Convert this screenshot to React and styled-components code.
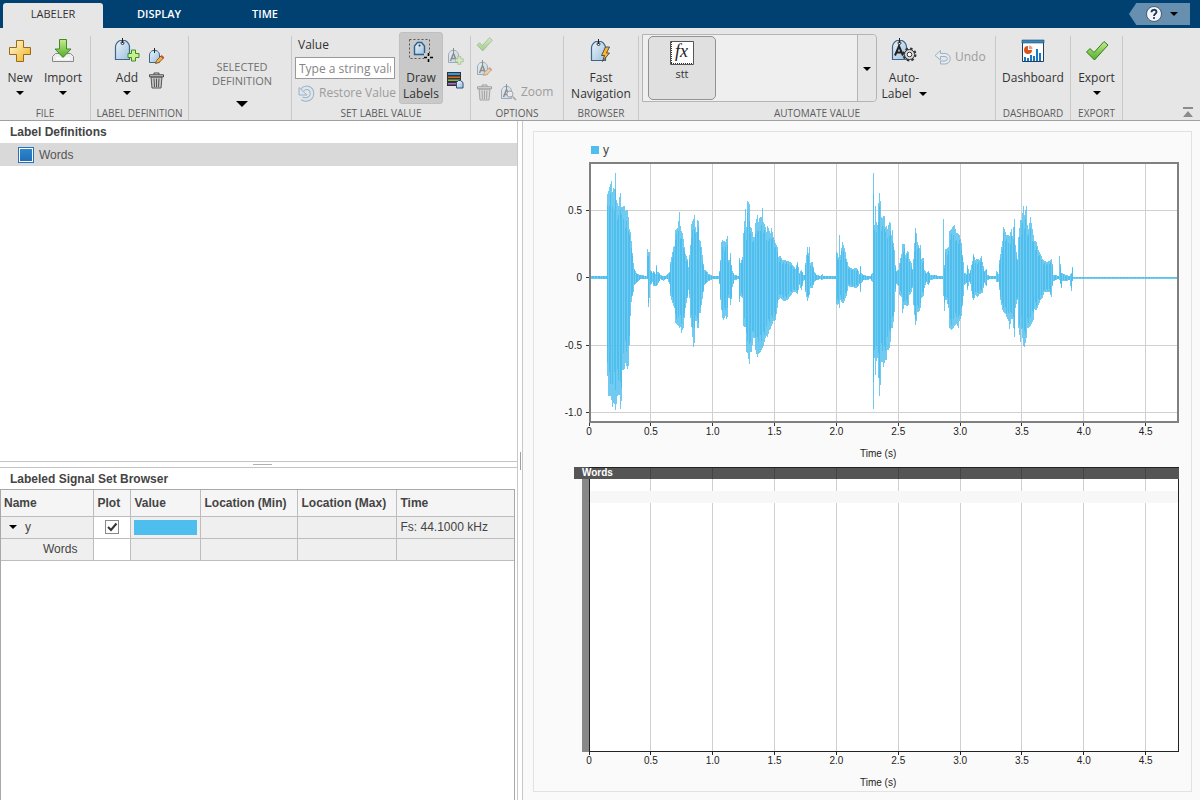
import React from "react";
import styled, { createGlobalStyle } from "styled-components";

const Global = createGlobalStyle`
  * { box-sizing: border-box; }
  body { margin: 0; font-family: "Liberation Sans", Arial, sans-serif; font-size: 12px; color: #444; }
  button, input { font: inherit; color: inherit; }
`;

const UI = `"Open Sans", "Noto Sans", sans-serif`;

/* ---------- page frame ---------- */
const Page = styled.div`
  display: flex; flex-direction: column; min-height: 100vh; background: #fff;
`;
const TabBar = styled.nav`
  display: flex; align-items: flex-end; gap: 6px; height: 28px; padding-left: 3px;
  background: #004172; font-family: ${UI};
`;
const Tab = styled.button`
  width: 100px; height: 25px; padding: 0 0 3px; border: 0; border-radius: 3px 3px 0 0;
  font-size: 11px; line-height: 16px;
  background: ${(p) => (p.$active ? "#e6e6e6" : "transparent")};
  color: ${(p) => (p.$active ? "#333" : "#fff")};
  font-weight: ${(p) => (p.$active ? 400 : 600)};
`;
const Help = styled.button`
  display: flex; align-items: center; gap: 8px; width: 61px; height: 22px;
  margin: 0 10px 3px auto; padding: 0 0 0 17px; border: 0; background: #6790b0; color: #000;
  clip-path: polygon(0 50%, 12% 0, 100% 0, 100% 100%, 12% 100%);
`;
const Strip = styled.div`
  display: flex; height: 93px; background: #e6e6e6; border-bottom: 1px solid #a0a0a0;
  font-family: ${UI}; color: #333;
`;
const Section = styled.section`
  position: relative; display: flex; flex-direction: column; flex: none;
  width: ${(p) => p.$w}px; padding: 4px 1px 0 0;
  &::after {
    content: ""; position: absolute; right: 0; top: 8px; bottom: 0; width: 1px; background: #c8c8c8;
  }
`;
const Body = styled.div`
  display: flex; flex: none; height: 72px; padding-left: ${(p) => p.$pad || 0}px;
  justify-content: ${(p) => p.$justify || "flex-start"};
`;
const Caption = styled.h2`
  flex: none; margin: 0; font-size: 10px; line-height: 18px; font-weight: 400; color: #5c5c5c;
  text-align: center; white-space: nowrap;
`;
const Big = styled.button`
  display: flex; flex-direction: column; align-items: center; justify-content: flex-start; flex: none;
  width: ${(p) => p.$w}px; height: 72px; padding: ${(p) => (p.$pressed ? "4px" : "5px")} 0 0;
  border: ${(p) => (p.$pressed ? "1px solid #c0c0c0" : "0")}; border-radius: 3px;
  background: ${(p) => (p.$pressed ? "#c9c9c9" : "transparent")};
  font-size: 12px; line-height: 16px; white-space: nowrap;
  > svg:first-child { flex: none; margin-bottom: 7px; overflow: visible; }
`;
const Stack = styled.div`
  display: flex; flex-direction: column; gap: ${(p) => p.$gap || 0}px;
  padding: ${(p) => p.$top || 0}px 0 0 ${(p) => p.$left || 0}px;
`;
const Row = styled.div`
  display: flex; gap: 7px;
`;
const Small = styled.button`
  display: flex; align-items: center; gap: 4px; height: 20px; padding: 0; border: 0;
  background: transparent; font-size: 12px; line-height: 16px; white-space: nowrap;
  &:disabled { color: #9c9c9c; }
  &:disabled svg { opacity: 0.45; }
`;
const Selected = styled.button`
  display: flex; flex-direction: column; align-items: center; align-self: flex-start;
  width: 100%; padding: 28px 0 0 4px;
  border: 0; background: transparent; font-size: 11px; line-height: 14px; color: #707070;
  svg { flex: none; margin-top: 13px; }
`;
const ValueBox = styled.div`
  display: flex; flex-direction: column; width: 104px;
  label { font-size: 12px; line-height: 16px; padding: 5px 0 4px 3px; }
  input {
    width: 100px; height: 22px; border: 1px solid #999; background: #fff; padding: 0 3px; font-size: 12px;
  }
  input::placeholder { color: #858585; opacity: 1; }
  button { margin: 4px 0 0 3px; }
`;
const Gallery = styled.div`
  display: flex; flex: none; width: 235px; height: 68px; margin: 2px 8px 0 0; padding: 1px 0 1px 5px;
  border: 1px solid #b4b4b4; border-radius: 0 4px 4px 0; background: #efefef;
`;
const Tile = styled.button`
  display: flex; flex-direction: column; align-items: center; width: 68px; height: 64px; padding: 3px 0;
  border: 1px solid #929292; border-radius: 5px; background: #e0e0e0; font-size: 11px; line-height: 16px;
`;
const GalleryMore = styled.button`
  width: 19px; margin: -1px 0 -1px auto; padding: 0 0 4px; border: 0; border-left: 1px solid #b4b4b4;
  background: #e6e6e6; border-radius: 0 4px 4px 0;
`;
const Collapse = styled.button`
  align-self: flex-end; margin: 0 6px 2px auto; padding: 0; border: 0; background: none; line-height: 0;
`;

/* ---------- panels ---------- */
const Main = styled.main`
  flex: 1; display: grid; grid-template-columns: minmax(0, 518fr) 5px minmax(0, 677fr);
`;
const Left = styled.div`
  display: grid; grid-template-rows: minmax(120px, 340fr) 7px minmax(120px, 332fr);
  border-right: 1px solid #c8c8c8;
`;
const HSplit = styled.div`
  display: flex; align-items: center; justify-content: center;
  border: solid #c4c4c4; border-width: 1px 0; padding-left: 8px;
  &::after { content: ""; width: 19px; height: 1px; background: #b0b0b0; }
`;
const VSplit = styled.div`
  display: flex; align-items: center; justify-content: center; border-right: 1px solid #c8c8c8;
  &::after { content: ""; width: 1px; height: 18px; background: #a0a0a0; }
`;
const Panel = styled.section`
  display: flex; flex-direction: column;
`;
const PanelTitle = styled.h3`
  margin: 0; padding: 4px 10px 0; font-size: 12px; line-height: 15px; height: ${(p) => p.$h}px; color: #444;
`;
const DefRow = styled.button`
  display: flex; align-items: center; gap: 5px; width: 100%; height: 23px; padding: 0 18px;
  border: 0; background: #d9d9d9; color: #555;
`;
const Swatch = styled.span`
  width: 16px; height: 16px; border: 1px solid #2173bd; box-shadow: inset 0 0 0 1px #fff;
  background: linear-gradient(#3088cc, #1d6cb6);
`;
const TableWrap = styled.div`
  flex: 1; margin-right: 2px; border: 1px solid #a8a8a8; border-bottom: 0;
`;
const Table = styled.table`
  width: 100%; table-layout: fixed; border-collapse: collapse;
  th, td {
    padding: 0 3px; text-align: left; border: 1px solid #bdbdbd; height: 22px; background: #efefef; white-space: nowrap;
    overflow: hidden;
  }
  th { height: 26px; background: #f5f5f5; }
  th + th, td:last-child { padding-left: 4px; }
  tr > :first-child { border-left: 0; }
  tr > :last-child { border-right: 0; }
  thead th { border-top: 0; }
`;
const Col = styled.col`
  width: ${(p) => p.$w}px;
`;
const PlotCell = styled.td`
  && { background: #fff; text-align: center; line-height: 0; }
`;
const Check = styled.input`
  appearance: none; width: 14px; height: 14px; margin: 0; border: 1px solid #888; background: #fff;
  & + svg { visibility: hidden; }
  &:checked + svg { visibility: visible; }
`;
const CheckWrap = styled.label`
  display: inline-grid; > * { grid-area: 1 / 1; }
  svg { pointer-events: none; }
`;
const ColorBar = styled.div`
  height: 15px; background: #4dbeee;
`;
const Node = styled.div`
  display: flex; align-items: center; gap: 8px; padding-left: ${(p) => p.$in}px;
`;

/* ---------- charts ---------- */
const Right = styled.div`
  display: flex; padding: 10px 8px 8px 10px; background: #fafafa;
`;
const Card = styled.div`
  flex: 1; display: flex; flex-direction: column; border: 1px solid #e2e2e2; padding: 0 12px 0 55px;
`;
const Legend = styled.div`
  display: flex; align-items: center; gap: 4px; height: 30px; padding: 6px 2px 0; line-height: 16px;
  &::before { content: ""; width: 8px; height: 8px; background: #4dbeee; }
`;
const PlotBox = styled.div`
  position: relative; flex: ${(p) => p.$grow} 1 0; min-height: 160px; margin-bottom: ${(p) => p.$gap}px;
`;
const Svg = styled.svg`
  position: absolute; inset: 0; width: 100%; height: 100%; overflow: visible;
  text { font: 10px "Liberation Sans", Arial, sans-serif; fill: #222; }
  .title { font-weight: 700; fill: #fff; }
  line, rect { shape-rendering: crispEdges; }
`;
const Frame = styled.rect`
  width: calc(100% - 1px); height: calc(100% - 1px);
`;
const SideBar = styled.rect`
  width: 7px; height: calc(100% - 12px);
`;

/* Signal envelope: [x, peak above zero, peak below zero] */
const ENV = [
  [0,1,0],[17,1,1],[18,83,98],[19,86,118],[21,93,118],[22,96,122],[23,85,129],[24,89,125],[25,88,126],[26,104,132],[27,77,126],[28,74,118],[29,71,117],[30,80,117],[31,84,131],[32,70,123],[33,70,92],[35,71,91],[36,66,85],[38,67,91],[39,60,88],[40,48,67],[41,45,38],[42,36,24],[43,24,18],[44,14,14],[45,8,7],[47,4,5],[48,3,4],[51,2,1],[57,1,1],[58,28,1],[59,25,29],[60,25,20],[61,7,7],[63,4,4],[64,6,8],[66,3,8],[67,12,8],[68,5,7],[70,4,3],[71,2,1],[74,1,3],[76,1,1],[78,3,1],[80,5,6],[81,15,18],[82,20,22],[84,30,28],[85,31,30],[86,47,45],[88,49,47],[89,56,48],[90,65,50],[91,51,49],[92,46,55],[93,44,52],[94,38,50],[95,30,40],[96,23,30],[98,18,20],[99,10,12],[100,22,20],[101,32,40],[102,53,49],[104,58,69],[105,62,65],[106,50,43],[107,45,43],[108,57,50],[109,56,50],[110,37,35],[111,36,35],[112,30,27],[114,13,14],[115,7,7],[117,6,5],[119,3,3],[121,2,2],[123,1,1],[129,1,1],[130,6,6],[131,17,22],[132,35,32],[133,37,40],[134,36,42],[136,35,38],[137,38,41],[138,41,39],[139,17,20],[140,17,20],[141,24,27],[142,12,21],[143,6,9],[145,2,2],[149,1,1],[150,19,24],[151,14,18],[153,20,20],[154,44,48],[156,68,49],[157,50,74],[158,76,75],[160,73,86],[161,50,74],[162,49,74],[164,40,60],[165,40,60],[166,54,72],[168,62,79],[169,55,76],[170,59,75],[172,60,72],[173,69,70],[174,55,68],[176,50,60],[177,45,58],[178,51,59],[180,46,52],[181,44,51],[182,49,48],[184,40,43],[186,34,42],[188,30,30],[189,20,22],[191,21,20],[193,17,22],[195,17,23],[198,16,22],[201,15,18],[204,11,14],[206,8,14],[208,15,16],[210,4,7],[212,7,12],[214,2,3],[215,2,2],[216,14,14],[218,30,23],[219,24,20],[220,30,17],[221,14,10],[223,15,10],[225,5,4],[227,2,2],[231,1,1],[233,3,2],[234,1,1],[246,1,1],[247,25,26],[248,24,27],[249,20,26],[250,42,30],[251,22,22],[253,35,25],[254,32,25],[256,25,20],[257,18,18],[259,11,8],[261,9,9],[264,8,9],[266,9,10],[268,8,9],[270,3,6],[271,11,14],[272,4,5],[274,2,2],[278,1,2],[281,1,1],[283,4,4],[284,104,131],[285,52,80],[286,71,97],[287,55,83],[288,52,80],[289,74,100],[290,84,118],[291,76,107],[292,60,84],[293,59,84],[294,61,89],[295,61,85],[296,50,82],[297,51,82],[298,48,72],[299,52,72],[300,55,70],[301,54,64],[302,42,50],[303,47,50],[304,34,44],[305,27,34],[306,12,14],[307,6,6],[309,7,8],[310,14,17],[312,23,19],[313,33,35],[315,33,27],[316,22,27],[318,26,28],[319,25,27],[320,18,17],[322,14,14],[323,8,10],[324,18,27],[326,49,47],[327,44,43],[328,35,34],[330,29,33],[331,32,30],[332,18,20],[334,19,18],[335,7,10],[337,4,4],[339,6,7],[341,2,2],[346,2,1],[348,1,1],[353,1,1],[354,58,18],[355,12,33],[356,28,22],[357,28,22],[359,30,30],[360,46,50],[362,48,52],[364,51,50],[365,52,48],[367,44,46],[369,43,50],[370,42,43],[372,34,38],[373,22,28],[374,15,18],[375,4,7],[377,3,5],[378,12,12],[380,4,4],[381,7,6],[383,16,20],[384,23,22],[386,17,17],[388,18,19],[390,17,16],[392,21,15],[393,15,15],[395,6,5],[397,8,8],[398,2,2],[400,1,1],[406,1,1],[407,6,4],[409,3,4],[410,17,12],[411,23,22],[413,36,32],[414,50,34],[416,45,36],[417,42,39],[419,42,43],[420,41,51],[422,48,41],[423,41,41],[425,58,59],[426,32,30],[428,18,22],[429,40,50],[431,57,64],[432,57,51],[434,71,68],[435,62,69],[437,71,60],[438,52,50],[439,48,50],[441,60,48],[442,54,46],[444,42,42],[445,36,31],[447,35,32],[449,27,27],[451,23,22],[453,18,20],[455,16,14],[458,15,14],[460,16,14],[462,18,19],[463,13,8],[464,2,3],[466,2,2],[469,1,1],[470,21,2],[472,4,10],[473,4,3],[476,2,3],[480,1,2],[482,4,13],[483,10,3],[484,0,0],[587,0,0],
];

const ZERO = 115;
function bars(scale, floor) {
  let d = "";
  let k = 0;
  for (let x = 1; x < 588; x++) {
    while (k < ENV.length - 2 && ENV[k + 1][0] <= x) k++;
    const [x0, u0, d0] = ENV[k];
    const [x1, u1, d1] = ENV[k + 1];
    const t = Math.min(1, (x - x0) / (x1 - x0));
    const s = scale(x);
    if (s === 0) continue;
    const up = Math.round((u0 + (u1 - u0) * t) * s);
    const dn = Math.max(floor, Math.round((d0 + (d1 - d0) * t) * s));
    d += `M${x} ${ZERO - up}h1V${ZERO + 1 + dn}h-1z`;
  }
  return d;
}
const OUTER = bars(() => 1, 1);
const INNER = bars((x) => ((x * 7) % 11 < 4 ? 0 : 0.72 + ((x * 37) % 11) / 40), 0);

const T = ["0", "0.5", "1.0", "1.5", "2.0", "2.5", "3.0", "3.5", "4.0", "4.5"];
const tx = (i) => `${((i * 61.85) / 590) * 100}%`;
const LEVELS = [["0.5", 48.5], ["0", 115.5], ["-0.5", 183.5], ["-1.0", 250.5]];

const XAxis = ({ color }) => (
  <>
    {T.map((t, i) => (
      <g key={t}>
        {i > 0 && <line x1={tx(i)} x2={tx(i)} y1="0" y2="100%" stroke="#d0d0d0" />}
        <svg y="100%" overflow="visible">
          <line x1={tx(i)} x2={tx(i)} y1="0" y2="3" stroke={color} />
          <text x={tx(i)} y="12" textAnchor="middle">{t}</text>
        </svg>
      </g>
    ))}
    <svg y="100%" overflow="visible">
      <text x="49%" y="34" textAnchor="middle">Time (s)</text>
    </svg>
  </>
);

const SignalPlot = () => (
  <PlotBox $grow={261} $gap={44}>
    <Svg role="img" aria-label="Signal y">
      <rect width="100%" height="100%" fill="#fff" />
      <XAxis color="#333" />
      {LEVELS.map(([t, y]) => (
        <g key={t}>
          {t !== "0" && <line x1="0" x2="100%" y1={`${(y / 261) * 100}%`} y2={`${(y / 261) * 100}%`} stroke="#d0d0d0" />}
          <line x1="-3" x2="0" y1={`${(y / 261) * 100}%`} y2={`${(y / 261) * 100}%`} stroke="#333" />
          <text x="-7" y={`${(y / 261) * 100}%`} dy="3" textAnchor="end">{t}</text>
        </g>
      ))}
      <svg viewBox="0 0 590 261" preserveAspectRatio="none" width="100%" height="100%">
        <path d={OUTER} fill="#4dbeee" opacity="0.8" />
        <path d={INNER} fill="#4dbeee" />
      </svg>
      <line x1="0" x2="100%" y1="1" y2="1" stroke="#808080" strokeWidth="2" />
      <line x1="1" x2="1" y1="0" y2="100%" stroke="#808080" strokeWidth="2" />
      <svg y="100%" overflow="visible"><line x1="0" x2="100%" y1="-1" y2="-1" stroke="#808080" strokeWidth="2" /></svg>
      <svg x="100%" overflow="visible"><line x1="-1" x2="-1" y1="0" y2="100%" stroke="#808080" strokeWidth="2" /></svg>
    </Svg>
  </PlotBox>
);

const LabelPlot = () => (
  <PlotBox $grow={285} $gap={39}>
    <Svg role="img" aria-label="Words labels">
      <Frame fill="#fff" />
      <XAxis color="#222" />
      <rect y="24" width="100%" height="12" fill="#f7f7f7" />
      <SideBar x="-7" y="12" fill="#888" />
      <Frame fill="none" stroke="#222" />
      <rect x="-15" width="15" height="12" fill="#555" />
      <rect y="1" width="100%" height="11" fill="#555" />
      {T.slice(1).map((t, i) => (
        <line key={t} x1={tx(i + 1)} x2={tx(i + 1)} y1="1" y2="12" stroke="#444" />
      ))}
      <text className="title" x="-7" y="9">Words</text>
    </Svg>
  </PlotBox>
);

/* ---------- icons ---------- */
const Arrow = ({ w = 8 }) => (
  <svg width={w} height={w / 2} viewBox="0 0 8 4" fill="#000"><path d="M0 0h8L4 4z" /></svg>
);
const Drop = styled.span`
  display: flex; justify-content: center; padding-top: 5px;
`;
const Inline = styled.span`
  display: flex; align-items: center; gap: 7px;
`;
const Gradients = () => (
  <defs>
    <linearGradient id="tagFill" x2="1" y2="1"><stop stopColor="#eaf4fb" /><stop offset="1" stopColor="#9dc1de" /></linearGradient>
    <linearGradient id="gold" x2="1" y2="1"><stop stopColor="#fffbe0" /><stop offset="1" stopColor="#efb018" /></linearGradient>
    <linearGradient id="green" x2="0" y2="1"><stop stopColor="#c8ec8c" /><stop offset="1" stopColor="#52ad28" /></linearGradient>
  </defs>
);
const Ic = ({ s = 26, box, children }) => (
  <svg width={s} height={s} viewBox={box || (s === 26 ? "-1 -2 26 26" : `0 0 ${s} ${s}`)} fill="none">
    <Gradients />
    {children}
  </svg>
);
const BigTag = () => (
  <>
    <path d="M1.500 21.500V8.500C1.500 6.500 3.500 3.500 6 2.500h5c2.500 1 4.500 4 4.500 6v13z" fill="url(#tagFill)" stroke="#3f6688" strokeWidth="1.200" />
    <circle cx="8.500" cy="5" r="1.500" fill="#fff" stroke="#333" /><path d="M8.500 0v5" stroke="#222" />
  </>
);
const SmallTag = ({ letter }) => (
  <>
    <path d="M1.500 14.500V7C1.500 5 3 3 5 2.500h3c2 .5 3.500 2.500 3.500 4.500v7.500z" fill="url(#tagFill)" stroke="#3f6688" />
    <path d="M6.500 0v5" stroke="#222" />
    {letter && <path d="M3.500 13 6.500 5.500 9.500 13M4.800 10.500h3.400" stroke="#222" strokeWidth="1.400" />}
  </>
);
const Plus = ({ x, y, s = 1 }) => (
  <path transform={`translate(${x} ${y}) scale(${s})`} d="M4 .5h4V4h3.500v4H8v3.500H4V8H.5V4H4z" fill="#c9f08e" stroke="#3d8c27" />
);
const NewIcon = () => <Ic><path d="M8.500 1.500h7v7h7v7h-7v7h-7v-7h-7v-7h7z" fill="url(#gold)" stroke="#9a6a16" /></Ic>;
const ImportIcon = () => (
  <Ic>
    <path d="M4.500 14.500h15l3 3v5h-21v-5z" fill="#eee" stroke="#888" /><path d="M5 18.500h14v2H5z" fill="#fff" />
    <path d="M8.500 .5h7V10h4.500L12 18.500 4 10h4.500z" fill="url(#green)" stroke="#3d8c27" />
  </Ic>
);
const AddIcon = () => <Ic box="0 -1 26 26"><BigTag /><Plus x={13.5} y={11.5} /></Ic>;
const PencilMark = () => (
  <g transform="translate(7 7)"><path d="M.5 8.500 1.500 5.500 6 1l2.500 2L4 7.500z" fill="#f3b14c" stroke="#8a5a24" /><path d="M6 .8 8.600 3" stroke="#c84f3a" strokeWidth="2" /></g>
);
const EditIcon = ({ letter }) => <Ic s={17}><SmallTag letter={letter} /><PencilMark /></Ic>;
const TrashIcon = () => (
  <Ic s={17}>
    <path d="M3 5h11l-1 11H4z" fill="#c8c8c8" stroke="#555" /><path d="M6 6.500 6.500 15M8.500 6.500V15M11 6.500 10.500 15" stroke="#555" />
    <path d="M1.500 2.800h14v2h-14z" fill="#ddd" stroke="#444" /><path d="M6 2.500V1h5v1.500" stroke="#444" />
  </Ic>
);
const RestoreIcon = () => (
  <Ic s={17}>
    <path d="M4.500 4.800C8 1 14 3 14 8.500S8 15.500 4 13.500" stroke="#42739e" strokeWidth="4.500" />
    <path d="M4.500 4.800C8 1 14 3 14 8.500S8 15.500 4 13.500" stroke="#d3e6f5" strokeWidth="2.500" />
    <path d="M1 2.500v7.500h8z" fill="#d3e6f5" stroke="#42739e" />
  </Ic>
);
const UndoIcon = () => (
  <Ic s={17}><path d="M1 6.500 6.500 1.500v3H11a5 5 0 0 1 0 10.500H6.500v-3H11a2 2 0 0 0 0-4.500H6.500v3.500z" fill="#e4f1fb" stroke="#42739e" /></Ic>
);
const DrawIcon = () => (
  <Ic box="0 0 26 26">
    <path d="M1.500 2.500h20v19h-20z" stroke="#555" strokeDasharray="2 2" />
    <path d="M6.500 17.500V9l3-3.500h4l3 3.500v8.500z" fill="url(#tagFill)" stroke="#2c5f8c" strokeWidth="1.400" /><circle cx="11.500" cy="8.500" r="1" fill="#234" />
    <path d="M16 16h9v9h-9z" fill="#c9c9c9" />
    <path d="M20.500 16v3M20.500 22v3M16 20.500h3M22 20.500h3" stroke="#000" strokeWidth="1.600" />
  </Ic>
);
const TagPlusSmall = () => <Ic s={17}><SmallTag letter /><Plus x={8} y={8} s={0.72} /></Ic>;
const ListIcon = () => (
  <Ic s={17}>
    <path d="M0 0h14v14H0z" fill="#333" /><path d="M1 1h12v2H1z" fill="#2d9ae0" /><path d="M1 4.500h12v1.500H1z" fill="#e06428" /><path d="M1 7.500h12V9H1z" fill="#7ac143" /><path d="M1 11h8v1.500H1z" fill="#b06ad8" />
    <path d="M9.500 16V10.500l2-2h2l2.500 2V16z" fill="url(#tagFill)" stroke="#2c4f80" />
  </Ic>
);
const CheckIcon = ({ small }) => (
  <Ic s={small ? 17 : 26} box={small ? "0 0 24 24" : undefined}>
    <path d="M1.500 13 5 9.500l4 4L19 2.500 23 6 9.500 21z" fill="url(#green)" stroke="#2f7d20" />
  </Ic>
);
const ZoomIcon = () => <Ic s={17}><SmallTag letter /><circle cx="10" cy="10" r="3" fill="#eef" stroke="#555" /><path d="m12.500 12.500 3.500 3.500" stroke="#555" strokeWidth="1.500" /></Ic>;
const FastIcon = () => <Ic box="-2 -2 26 26"><BigTag /><path d="M15.500 8 11.500 16.500h3l-2 6L19.500 14h-3L19.500 8z" fill="#ffb42a" stroke="#444" strokeWidth=".9" /></Ic>;
const FxIcon = () => (
  <Ic box="0 0 26 26">
    <path d="M1.500 1.500h23v23h-23z" fill="#fff" stroke="#555" /><path d="M2.500 2v22M2 23.500h22" stroke="#333" strokeDasharray="1 1" />
    <text x="6" y="17" fontFamily="Liberation Serif, serif" fontStyle="italic" fontSize="18" fill="#222">fx</text>
  </Ic>
);
const AutoIcon = () => (
  <Ic box="0 -1 26 26">
    <BigTag /><path d="M4 17.500 8 8l4 9.500M5.500 14.500h5" stroke="#222" strokeWidth="2" />
    <circle cx="18.500" cy="16.500" r="5.500" stroke="#333" strokeWidth="3" strokeDasharray="2.300 2" /><circle cx="18.500" cy="16.500" r="5" fill="#ddd" stroke="#333" /><circle cx="18.500" cy="16.500" r="2.300" fill="#fff" stroke="#333" />
  </Ic>
);
const DashIcon = () => (
  <Ic>
    <path d="M1.500 1.500h21v21h-21z" fill="#fff" stroke="#1f3f5f" /><path d="M1 1h22v3H1z" fill="#3d86bd" stroke="#1f4f77" strokeWidth=".6" />
    <path d="M7 7a4 4 0 1 0 4 4H7z" fill="#d8541f" /><path d="M8 6.500a3.500 3.500 0 0 1 3.500 3.500H8z" fill="#f0a070" />
    <path d="M4 22v-4M7 22v-3M10 22v-6M13 22v-5M16 22V10M19 22v-8" stroke="#1878c4" strokeWidth="2" />
  </Ic>
);

export default function App() {
  return (
    <Page>
      <Global />
      <TabBar>
        <Tab $active>LABELER</Tab>
        <Tab>DISPLAY</Tab>
        <Tab>TIME</Tab>
        <Help aria-label="Help">
          <svg width="16" height="16" viewBox="0 0 16 16"><circle cx="8" cy="8" r="7.500" fill="#f2f6fa" stroke="#234" strokeWidth=".7" /><path d="M5.500 6.200C5.500 3 10.500 3 10.500 6 10.500 7.800 8 7.800 8 10" stroke="#1b3550" strokeWidth="1.800" fill="none" /><circle cx="8" cy="12" r="1.100" fill="#1b3550" /></svg>
          <Arrow />
        </Help>
      </TabBar>
      <Strip>
        <Section $w={91}>
          <Body>
            <Big $w={40}><NewIcon />New<Drop><Arrow /></Drop></Big>
            <Big $w={46}><ImportIcon />Import<Drop><Arrow /></Drop></Big>
          </Body>
          <Caption>FILE</Caption>
        </Section>
        <Section $w={98}>
          <Body $pad={16}>
            <Big $w={40}><AddIcon />Add<Drop><Arrow /></Drop></Big>
            <Stack $top={14} $gap={4} $left={1}>
              <Small aria-label="Edit definition"><EditIcon /></Small>
              <Small aria-label="Delete definition"><TrashIcon /></Small>
            </Stack>
          </Body>
          <Caption>LABEL DEFINITION</Caption>
        </Section>
        <Section $w={103}>
          <Body><Selected><span>SELECTED</span><span>DEFINITION</span><Arrow w={12} /></Selected></Body>
        </Section>
        <Section $w={179}>
          <Body $pad={3}>
            <ValueBox>
              <label htmlFor="value">Value</label>
              <input id="value" placeholder="Type a string value" />
              <Small disabled><RestoreIcon />Restore Value</Small>
            </ValueBox>
            <Big $w={44} $pressed><DrawIcon /><span>Draw</span><span>Labels</span></Big>
            <Stack $top={14} $gap={4} $left={4}>
              <Small disabled aria-label="Add label"><TagPlusSmall /></Small>
              <Small aria-label="Label list"><ListIcon /></Small>
            </Stack>
          </Body>
          <Caption>SET LABEL VALUE</Caption>
        </Section>
        <Section $w={93}>
          <Body $pad={5}>
            <Stack $top={2} $gap={4}>
              <Small disabled aria-label="Accept"><CheckIcon small /></Small>
              <Small disabled aria-label="Edit label"><EditIcon letter /></Small>
              <Row>
                <Small disabled aria-label="Delete label"><TrashIcon /></Small>
                <Small disabled><ZoomIcon />Zoom</Small>
              </Row>
            </Stack>
          </Body>
          <Caption>OPTIONS</Caption>
        </Section>
        <Section $w={75}>
          <Body $justify="center"><Big $w={70}><FastIcon /><span>Fast</span><span>Navigation</span></Big></Body>
          <Caption>BROWSER</Caption>
        </Section>
        <Section $w={357}>
          <Body $pad={3}>
            <Gallery>
              <Tile><FxIcon />stt</Tile>
              <GalleryMore aria-label="Show more"><Arrow /></GalleryMore>
            </Gallery>
            <Big $w={38}><AutoIcon /><span>Auto-</span><Inline>Label <Arrow /></Inline></Big>
            <Stack $top={15} $left={11}><Small disabled><UndoIcon />Undo</Small></Stack>
          </Body>
          <Caption>AUTOMATE VALUE</Caption>
        </Section>
        <Section $w={75}>
          <Body $justify="center"><Big $w={70}><DashIcon />Dashboard</Big></Body>
          <Caption>DASHBOARD</Caption>
        </Section>
        <Section $w={52}>
          <Body $justify="center"><Big $w={46}><CheckIcon />Export<Drop><Arrow /></Drop></Big></Body>
          <Caption>EXPORT</Caption>
        </Section>
        <Collapse aria-label="Collapse toolstrip">
          <svg width="12" height="11" viewBox="0 0 12 11" fill="#8c8c8c"><path d="M1 0h10v2H1zM6 4l5 6H1z" /></svg>
        </Collapse>
      </Strip>
      <Main>
        <Left>
          <Panel>
            <PanelTitle $h={22}>Label Definitions</PanelTitle>
            <DefRow><Swatch />Words</DefRow>
          </Panel>
          <HSplit />
          <Panel>
            <PanelTitle $h={21}>Labeled Signal Set Browser</PanelTitle>
            <TableWrap>
              <Table>
                <colgroup><Col $w={92} /><Col $w={37} /><Col $w={70} /><Col $w={97} /><Col $w={99} /><col /></colgroup>
                <thead>
                  <tr><th>Name</th><th>Plot</th><th>Value</th><th>Location (Min)</th><th>Location (Max)</th><th>Time</th></tr>
                </thead>
                <tbody>
                  <tr>
                    <td><Node $in={5}><Arrow />y</Node></td>
                    <PlotCell>
                      <CheckWrap>
                        <Check type="checkbox" defaultChecked aria-label="Plot y" />
                        <svg width="14" height="14" viewBox="0 0 14 14" fill="none"><path d="m3 7 3 3 5.500-6.500" stroke="#333" strokeWidth="2" /></svg>
                      </CheckWrap>
                    </PlotCell>
                    <td><ColorBar /></td><td /><td /><td>Fs: 44.1000 kHz</td>
                  </tr>
                  <tr><td><Node $in={39}>Words</Node></td><PlotCell /><td /><td /><td /><td /></tr>
                </tbody>
              </Table>
            </TableWrap>
          </Panel>
        </Left>
        <VSplit />
        <Right>
          <Card>
            <Legend>y</Legend>
            <SignalPlot />
            <LabelPlot />
          </Card>
        </Right>
      </Main>
    </Page>
  );
}
